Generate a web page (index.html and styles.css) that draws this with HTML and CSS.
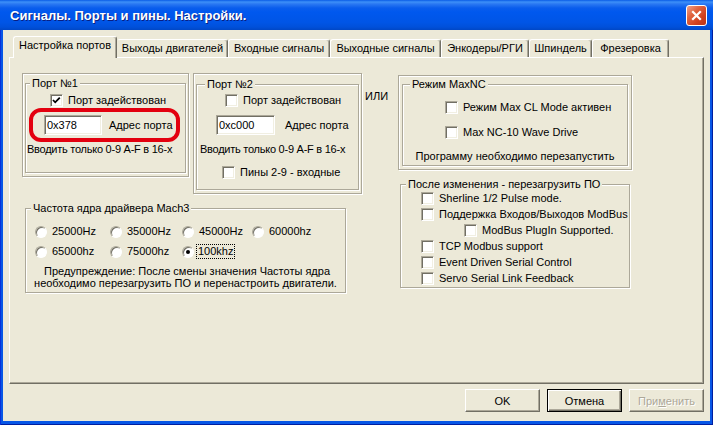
FILE: index.html
```html
<!DOCTYPE html>
<html lang="ru">
<head>
<meta charset="utf-8">
<title>Сигналы. Порты и пины. Настройки.</title>
<link rel="stylesheet" href="styles.css">
</head>
<body>
<div class="window">
  <div class="titlebar">
    <span class="title">Сигналы. Порты и пины. Настройки.</span>
    <span class="close"><svg width="13" height="13" viewBox="0 0 13 13"><path d="M3 3 L10 10 M10 3 L3 10" stroke="#fff" stroke-width="2.2" stroke-linecap="square" fill="none"/></svg></span>
  </div>
  <div class="client">
    <div class="tabs">
      <div class="tab active t1">Настройка портов</div>
      <div class="tab t2">Выходы двигателей</div>
      <div class="tab t3">Входные сигналы</div>
      <div class="tab t4">Выходные сигналы</div>
      <div class="tab t5">Энкодеры/РГИ</div>
      <div class="tab t6">Шпиндель</div>
      <div class="tab t7">Фрезеровка</div>
    </div>
    <div class="panel">
      <div class="left">
        <div class="ports">
          <div class="frame f1">
            <div class="group">
              <span class="legend lg1">Порт №1</span>
              <div class="row p1-check"><span class="cb"><svg width="11" height="11" viewBox="0 0 11 11"><path d="M2 5 L4.2 7.3 L8.8 2.6" stroke="#000" stroke-width="1.8" fill="none"/></svg></span><span>Порт задействован</span></div>
              <div class="hl"><span class="edit">0x378</span><span>Адрес порта</span></div>
              <div class="note p1-note">Вводить только 0-9 A-F в 16-х</div>
            </div>
          </div>
          <div class="frame f2">
            <div class="group">
              <span class="legend lg2">Порт №2</span>
              <div class="row p2-check"><span class="cb"></span><span>Порт задействован</span></div>
              <div class="addr p2-addr"><span class="edit">0xc000</span><span>Адрес порта</span></div>
              <div class="note p2-note">Вводить только 0-9 A-F в 16-х</div>
              <div class="row p2-pins"><span class="cb"></span><span>Пины 2-9 - входные</span></div>
            </div>
          </div>
        </div>
        <div class="group mach3">
          <span class="legend lg4">Частота ядра драйвера Mach3</span>
          <div class="radios">
            <div class="opt"><span class="rb"></span><span>25000Hz</span></div>
            <div class="opt"><span class="rb"></span><span>35000Hz</span></div>
            <div class="opt"><span class="rb"></span><span>45000Hz</span></div>
            <div class="opt"><span class="rb"></span><span>60000hz</span></div>
            <div class="opt"><span class="rb"></span><span>65000hz</span></div>
            <div class="opt"><span class="rb"></span><span>75000hz</span></div>
            <div class="opt"><span class="rb on"></span><span class="focus">100khz</span></div>
          </div>
          <div class="warn">&nbsp;Предупреждение: После смены значения Частоты ядра<br>необходимо перезагрузить ПО и перенастроить двигатели.</div>
        </div>
      </div>
      <div class="ili">ИЛИ</div>
      <div class="right">
        <div class="frame f3">
          <div class="group">
            <span class="legend lg3">Режим MaxNC</span>
            <div class="row mx1"><span class="cb"></span><span>Режим Max CL Mode активен</span></div>
            <div class="row mx2"><span class="cb"></span><span>Max NC-10 Wave Drive</span></div>
            <div class="mxnote">Программу необходимо перезапустить</div>
          </div>
        </div>
        <div class="group after">
          <span class="legend lg5">После изменения - перезагрузить ПО</span>
          <div class="arow"><span class="cb"></span><span>Sherline 1/2 Pulse mode.</span></div>
          <div class="arow"><span class="cb"></span><span>Поддержка Входов/Выходов ModBus</span></div>
          <div class="arow nested"><span class="cb"></span><span>ModBus PlugIn Supported.</span></div>
          <div class="arow"><span class="cb"></span><span>TCP Modbus support</span></div>
          <div class="arow"><span class="cb"></span><span>Event Driven Serial Control</span></div>
          <div class="arow"><span class="cb"></span><span>Servo Serial Link Feedback</span></div>
        </div>
      </div>
    </div>
    <div class="buttons">
      <span class="btn">OK</span>
      <span class="btn default">Отмена</span>
      <span class="btn disabled">При<u>м</u>енить</span>
    </div>
  </div>
</div>
</body>
</html>
```

FILE: styles.css
```css
* { box-sizing: border-box; }

body {
  margin: 0;
  width: 713px;
  height: 425px;
  overflow: hidden;
  background: #ffffff;
  font-family: "Liberation Sans", Arial, sans-serif;
  font-size: 11px;
  color: #000;
}

.window {
  width: 713px;
  height: 425px;
  display: flex;
  flex-direction: column;
  background: #0756E6;
  box-shadow: inset 1px 0 #0831D9, inset -1px 0 #001EA0, inset 0 -1px #001EA0;
}

.titlebar {
  height: 30px;
  flex: none;
  display: flex;
  align-items: center;
  padding: 0 6px 0 10px;
  background: linear-gradient(#0A5CE6 0, #3D90F8 2px, #2A78F2 4px, #0A5DEC 8px, #0058EE 40%, #0055E6 75%, #0050DA 90%, #0047C6 100%);
}

.title {
  flex: 1;
  color: #fff;
  font-family: "Liberation Sans", Arial, sans-serif;
  font-weight: bold;
  font-size: 13px;
  text-shadow: 1px 1px #0A1E80;
  white-space: nowrap;
}

.close {
  width: 21px;
  height: 21px;
  border: 1px solid #fff;
  border-radius: 3px;
  background: linear-gradient(135deg, #EFA18A 0%, #E06440 35%, #D0401E 70%, #B8351A 100%);
  display: flex;
  align-items: center;
  justify-content: center;
}

.client {
  flex: 1;
  margin: 0 3px 4px;
  background: #ECE9D8;
  padding: 6px 6px 0 6px;
  display: flex;
  flex-direction: column;
}

/* tabs */
.tabs {
  display: flex;
  align-items: flex-end;
  height: 21px;
  margin-left: 4px;
  position: relative;
  z-index: 1;
  flex: none;
}

.tab {
  height: 18px;
  flex: none;
  border: 1px solid #fff;
  border-bottom: none;
  border-right-color: #716F64;
  box-shadow: inset -1px 0 #ACA899;
  border-radius: 3px 3px 0 0;
  background: #ECE9D8;
  text-align: center;
  line-height: 13px;
  padding-top: 2px;
  white-space: nowrap;
}

.tab.active {
  height: 22px;
  margin-bottom: -1px;
  padding-top: 2px;
}

.t1 { width: 104px; }
.t2 { width: 111px; border-left-color: #ECE9D8; }
.t3 { width: 102px; }
.t4 { width: 111px; }
.t5 { width: 88px; }
.t6 { width: 63px; }
.t7 { width: 77px; }

/* panel */
.panel {
  height: 327px;
  flex: none;
  border: 1px solid;
  border-color: #fff #716F64 #716F64 #fff;
  box-shadow: inset -1px -1px #ACA899;
  padding: 15px 0 0 12px;
  display: flex;
  align-items: flex-start;
}

.left { width: 340px; flex: none; }

.ports {
  display: flex;
  gap: 4px;
  align-items: flex-start;
}

.frame {
  border: 1px solid #ACA899;
  box-shadow: inset 1px 1px #fff, 1px 1px #fff;
  padding: 9px 2px 3px;
  display: flex;
  flex-direction: column;
}

.f1 { width: 167px; height: 104px; }
.f2 { width: 169px; height: 121px; padding-top: 10px; }
.f3 { width: 234px; height: 95px; padding: 8px 3px 3px; }

.group {
  position: relative;
  flex: 1;
  border: 1px solid #ACA899;
  box-shadow: inset 1px 1px #fff, 1px 1px #fff;
}

.legend {
  position: absolute;
  top: -7px;
  left: 4px;
  padding: 0 2px;
  background: #ECE9D8;
  line-height: 13px;
  white-space: nowrap;
}

.lg1 { left: 4px; }
.lg2 { left: 8px; }
.lg3 { left: 7px; }
.lg4 { left: 5px; }
.lg5 { left: 5px; }

.row {
  display: flex;
  align-items: center;
  gap: 5px;
  height: 13px;
  line-height: 13px;
  white-space: nowrap;
}

.cb {
  width: 13px;
  height: 13px;
  flex: none;
  background: #fff;
  border: 1px solid;
  border-color: #ACA899 #fff #fff #ACA899;
  box-shadow: inset 1px 1px #716F64, inset -1px -1px #F1EFE2;
  display: flex;
  align-items: center;
  justify-content: center;
}

.rb {
  width: 12px;
  height: 12px;
  flex: none;
  border-radius: 50%;
  background: #fff;
  border: 1px solid;
  border-color: #ACA899 #fff #fff #ACA899;
  box-shadow: inset 1px 1px #716F64;
}

.rb.on {
  display: flex;
  align-items: center;
  justify-content: center;
}

.rb.on::after {
  content: "";
  width: 4px;
  height: 4px;
  border-radius: 50%;
  background: #000;
}

.edit {
  width: 59px;
  height: 20px;
  flex: none;
  background: #fff;
  border: 1px solid;
  border-color: #ACA899 #fff #fff #ACA899;
  box-shadow: inset 1px 1px #716F64, inset -1px -1px #F1EFE2;
  padding-left: 2px;
  line-height: 18px;
  white-space: nowrap;
}

.note {
  line-height: 13px;
  white-space: nowrap;
  letter-spacing: -0.25px;
}

/* port 1 */
.p1-check { margin: 10px 0 0 24px; }

.hl {
  margin: 1px 0 0 3px;
  width: 151px;
  height: 34px;
  border: 4px solid #E3000F;
  border-radius: 12px;
  display: flex;
  align-items: center;
  gap: 7px;
  padding-left: 11px;
  white-space: nowrap;
}

.hl .edit { width: 58px; }

.p1-note { margin: 1px 0 0 1px; }

/* port 2 */
.p2-check { margin: 9px 0 0 28px; }

.addr {
  display: flex;
  align-items: center;
  gap: 10px;
  white-space: nowrap;
}

.p2-addr { margin: 8px 0 0 19px; }
.p2-note { margin: 8px 0 0 3px; }
.p2-pins { margin: 10px 0 0 25px; }

/* mach3 */
.mach3 {
  margin: 14px 0 0 3px;
  width: 321px;
  height: 85px;
}

.radios {
  margin-top: 16px;
  padding-left: 9px;
  display: grid;
  grid-template-columns: 75px 72px 70px auto;
  grid-auto-rows: 13px;
  row-gap: 7px;
}

.opt {
  display: flex;
  align-items: center;
  gap: 5px;
  line-height: 13px;
  white-space: nowrap;
}

.focus {
  outline: 1px dotted #000;
  padding: 0 1px;
  margin-left: -2px;
}

.warn {
  margin-top: 7px;
  line-height: 12px;
  text-align: center;
  white-space: nowrap;
}

/* ili */
.ili {
  width: 36px;
  flex: none;
  padding: 17px 0 0 3px;
  line-height: 13px;
}

/* right */
.right {
  flex: none;
  margin-top: 2px;
}

.mx1 { margin: 16px 0 0 42px; }
.mx2 { margin: 12px 0 0 42px; }

.mxnote {
  margin-top: 11px;
  text-align: center;
  line-height: 13px;
  white-space: nowrap;
}

.after {
  margin: 14px 0 0 2px;
  width: 230px;
  height: 104px;
  padding-top: 5px;
}

.arow {
  display: flex;
  align-items: center;
  gap: 5px;
  height: 16px;
  padding-left: 20px;
  white-space: nowrap;
}

.arow.nested { padding-left: 63px; }

/* buttons */
.buttons {
  display: flex;
  justify-content: flex-end;
  gap: 7px;
  margin-top: 5px;
}

.btn {
  width: 75px;
  height: 23px;
  display: flex;
  align-items: center;
  justify-content: center;
  border: 1px solid;
  border-color: #fff #716F64 #716F64 #fff;
  box-shadow: inset -1px -1px #ACA899;
  white-space: nowrap;
}

.btn.default {
  border: 1px solid #000;
  box-shadow: inset 1px 1px #fff, inset -1px -1px #716F64, inset -2px -2px #ACA899;
}

.btn.disabled {
  color: #ACA899;
  text-shadow: 1px 1px #fff;
}
```
